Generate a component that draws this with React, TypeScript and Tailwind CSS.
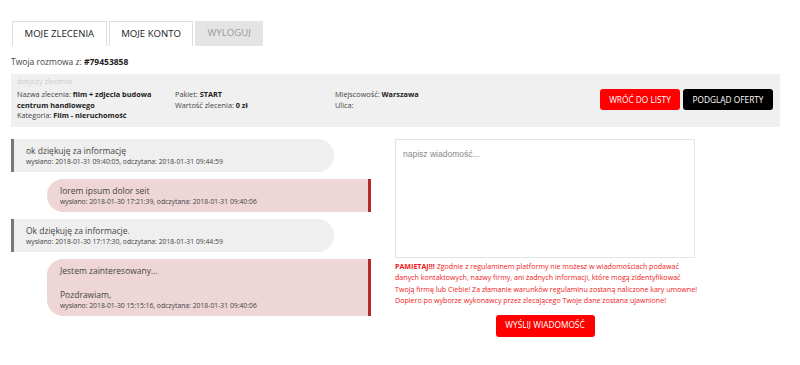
import React from "react";

const tabs = [
  { label: "MOJE ZLECENIA", active: true },
  { label: "MOJE KONTO", active: true },
  { label: "WYLOGUJ", active: false },
];

type Msg = { mine: boolean; lines: string[]; sent: string; read: string };

const messages: Msg[] = [
  { mine: false, lines: ["ok dziękuję za informację"], sent: "2018-01-31 09:40:05", read: "2018-01-31 09:44:59" },
  { mine: true, lines: ["lorem ipsum dolor seit"], sent: "2018-01-30 17:21:39", read: "2018-01-31 09:40:06" },
  { mine: false, lines: ["Ok dziękuję za informacje."], sent: "2018-01-30 17:17:30", read: "2018-01-31 09:44:59" },
  { mine: true, lines: ["Jestem zainteresowany...", "", "Pozdrawiam,"], sent: "2018-01-30 15:15:16", read: "2018-01-31 09:40:06" },
];

function Bubble({ m }: { m: Msg }) {
  const cls = m.mine
    ? "ml-[36px] bg-[#eed6d6] border-r-[3px] border-[#b52a2a] rounded-l-[16px] pl-[13px]"
    : "mr-[37px] bg-[#efefef] border-l-[3px] border-[#777] rounded-r-[16px] pl-[12px]";
  return (
    <div className={`${cls} pt-[6px] pb-[5px] pr-3`}>
      {m.lines.map((l, i) => (
        <div key={i} className="text-[8.5px] leading-[12px] text-[#444] min-h-[12px]">
          {l}
        </div>
      ))}
      <div className="text-[6.8px] leading-[10px] text-[#444]">
        wysłano: {m.sent}, odczytana: {m.read}
      </div>
    </div>
  );
}

export default function App() {
  return (
    <div className="w-[800px] h-[365px] bg-white px-[11px] pt-[21px] text-[#333]" style={{ fontFamily: "'Open Sans', sans-serif" }}>
      <div className="flex gap-[2px] pl-[1px]">
        {tabs.map((t) => (
          <div
            key={t.label}
            className={
              t.active
                ? "h-[25px] px-[11.5px] flex items-center border border-b-0 border-[#dcdcdc] bg-white text-[9.6px] text-[#222]"
                : "h-[25px] px-[12px] flex items-center bg-[#e4e4e4] text-[9.6px] text-[#999]"
            }
          >
            {t.label}
          </div>
        ))}
      </div>

      <div className="mt-[10px] text-[8.5px] leading-[12px] text-[#444]">
        Twoja rozmowa z: <b className="text-[#222]">#79453858</b>
      </div>

      <div className="mt-[6px] w-[769px] bg-[#f0f0f0] flex items-center pl-[6px] pr-[7px] pt-[2px] pb-[6px] text-[7.3px] leading-[10.5px] text-[#444]">
        <div className="flex-1">
          <div className="text-[#ccc] mb-[2.5px]">dotyczy zlecenia</div>
          <div className="flex">
            <div className="w-[158px]">
              <div>
                Nazwa zlecenia: <b className="text-[#222]">film + zdjecia budowa centrum handlowego</b>
              </div>
              <div>
                Kategoria: <b className="text-[#222]">Film - nieruchomość</b>
              </div>
            </div>
            <div className="w-[160px]">
              <div>
                Pakiet: <b className="text-[#222]">START</b>
              </div>
              <div>
                Wartość zlecenia: <b className="text-[#222]">0 zł</b>
              </div>
            </div>
            <div>
              <div>
                Miejscowość: <b className="text-[#222]">Warszawa</b>
              </div>
              <div>Ulica:</div>
            </div>
          </div>
        </div>
        <div className="flex gap-[3px] mt-[3px]">
          <div className="h-[21px] w-[80px] flex items-center justify-center rounded-[3px] bg-[#ff0000] text-white text-[8.3px]">
            WRÓĆ DO LISTY
          </div>
          <div className="h-[21px] w-[90px] flex items-center justify-center rounded-[3px] bg-black text-white text-[8.3px]">
            PODGLĄD OFERTY
          </div>
        </div>
      </div>

      <div className="mt-[12px] flex">
        <div className="w-[360px] flex flex-col gap-[7px]">
          {messages.map((m, i) => (
            <Bubble key={i} m={m} />
          ))}
        </div>
        <div className="ml-[24px] w-[300px]">
          <div className="h-[119px] border border-[#e3e3e3] px-[7px] py-[8px] text-[8.5px] text-[#888]" style={{ fontFamily: "'Liberation Sans', Arial, sans-serif" }}>
            napisz wiadomość...
          </div>
          <div className="mt-[3px] text-[7.1px] leading-[11.5px] text-[#f01818] whitespace-nowrap">
            <div>
              <b>PAMIETAJ!!!</b> Zgodnie z regulaminem platformy nie możesz w wiadomościach podawać
            </div>
            <div>danych kontaktowych, nazwy firmy, ani żadnych informacji, które mogą zidentyfikować</div>
            <div>Twoją firmę lub Ciebie! Za złamanie warunków regulaminu zostaną naliczone kary umowne!</div>
            <div>Dopiero po wyborze wykonawcy przez zlecającego Twoje dane zostana ujawnione!</div>
          </div>
          <div className="mt-[8px] flex justify-center">
            <div className="h-[22px] w-[99px] flex items-center justify-center rounded-[3px] bg-[#ff0000] text-white text-[8.3px]">
              WYŚLIJ WIADOMOŚĆ
            </div>
          </div>
        </div>
      </div>
    </div>
  );
}
